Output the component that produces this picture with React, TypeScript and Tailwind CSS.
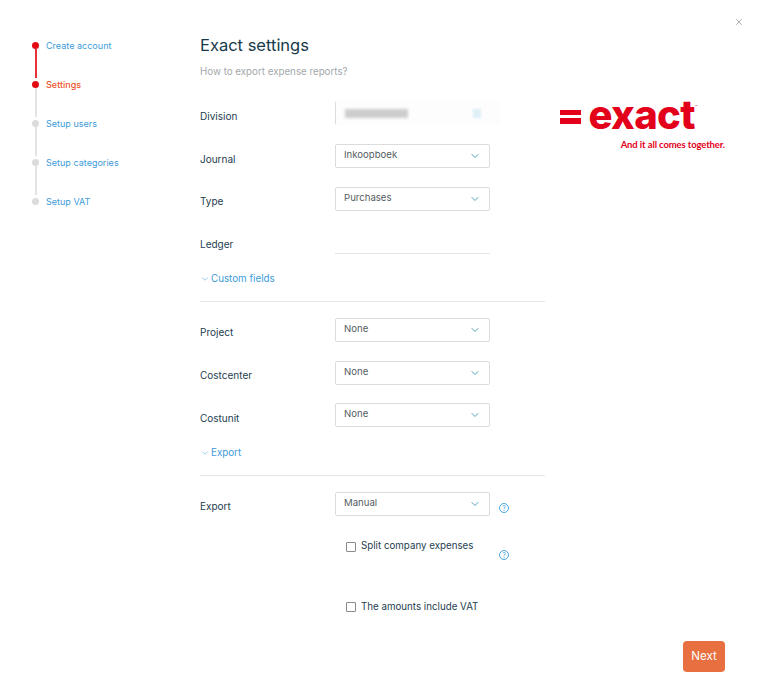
import React from "react";
import { ChevronDown, X } from "lucide-react";

type Step = { label: string; state: "done" | "active" | "todo" };

const steps: Step[] = [
	{ label: "Create account", state: "done" },
	{ label: "Settings", state: "active" },
	{ label: "Setup users", state: "todo" },
	{ label: "Setup categories", state: "todo" },
	{ label: "Setup VAT", state: "todo" },
];

function Stepper() {
	return (
		<ul className="w-[200px] shrink-0 pl-[32px] pt-[39px]">
			{steps.map((step, i) => (
				<li key={step.label} className="flex h-[39px] items-start gap-[7px]">
					<div className="flex h-full w-[7px] flex-col items-center pt-[3px]">
						<span className={`h-[7px] w-[7px] shrink-0 rounded-full ${step.state === "todo" ? "bg-[#dcdcdc]" : "bg-[#e30a13]"}`} />
						{i < steps.length - 1 && (
							<span className={`w-[2px] flex-1 ${i === 0 ? "bg-[#e8323a]" : "bg-[#e4e4e4]"}`} />
						)}
					</div>
					<span className={`text-[9px] leading-[13px] tracking-[0.02px] ${step.state === "active" ? "font-medium text-[#f0532d]" : "text-[#3d9bd9]"}`}>
						{step.label}
					</span>
				</li>
			))}
		</ul>
	);
}

function Select({ value }: { value: string }) {
	return (
		<div className="flex h-[24px] w-[155px] items-center justify-between rounded-[2px] border border-[#dcdcdc] bg-white pb-[2px] pl-[8px] pr-[8px]">
			<span className="text-[9.6px] text-[#555d62]">{value}</span>
			<ChevronDown size={12} strokeWidth={2} className="mt-[2px] text-[#4f9fbd]" />
		</div>
	);
}

function Row({ label, className, labelClass = "pt-[4px]", children }: { label: string; className: string; labelClass?: string; children?: React.ReactNode }) {
	return (
		<div className={`flex items-center ${className}`}>
			<label className={`w-[135px] shrink-0 text-[10px] text-[#24404f] ${labelClass}`}>{label}</label>
			{children}
		</div>
	);
}

function SectionLink({ label, className }: { label: string; className: string }) {
	return (
		<div className={`flex items-center gap-[1px] text-[#3d9bd9] ${className}`}>
			<ChevronDown size={10} strokeWidth={1.25} />
			<span className="text-[9.8px] leading-[13px]">{label}</span>
		</div>
	);
}

function Help({ className }: { className?: string }) {
	return (
		<span className={`ml-[9px] flex h-[10px] w-[10px] items-center justify-center rounded-full border border-[#4aa5e0] text-[7px] leading-none text-[#4aa5e0] ${className ?? ""}`}>
			?
		</span>
	);
}

function Check({ label }: { label: string }) {
	return (
		<div className="flex items-center gap-[5px]">
			<span className="h-[10px] w-[10px] rounded-[1px] border border-[#8a8a8a] bg-white" />
			<span className="text-[9.75px] text-[#24404f]">{label}</span>
		</div>
	);
}

function Logo() {
	return (
		<div className="flex flex-col items-end">
			<div className="flex items-start pr-[30px]">
				<div className="mr-[7px] flex flex-col gap-[3px] pt-[12px]">
					<span className="h-[5px] w-[21px] bg-[#e2001a]" />
					<span className="h-[6px] w-[21px] bg-[#e2001a]" />
				</div>
				<span className="text-[40px] font-extrabold leading-[34px] tracking-[-0.6px] text-[#e2001a]">exact</span>
				<span className="mt-[6px] w-0 text-[4px] leading-[5px] text-[#e2001a]">™</span>
			</div>
			<span className="mt-[7px] text-[9.5px] font-bold leading-[12px] tracking-[-0.12px] text-[#e2001a] font-['Lato',sans-serif]">
				And it all comes together.
			</span>
		</div>
	);
}

export default function App() {
	return (
		<div className="relative flex h-[693px] w-[763px] bg-white font-['Inter',sans-serif]">
			<X size={10} strokeWidth={1.5} className="absolute left-[734px] top-[17px] text-[#7f7f7f]" />
			<Stepper />
			<main className="w-[345px] shrink-0 pt-[34px]">
				<h1 className="text-[16.5px] leading-[22px] text-[#173a4a]">Exact settings</h1>
				<p className="mt-[9px] text-[9.75px] leading-[13px] text-[#a3a8ab]">How to export expense reports?</p>
				<Row label="Division" labelClass="pt-[6px]" className="mt-[23px]">
					<div className="flex h-[24px] w-[165px] items-center rounded-l-[2px] border-l border-[#dcdcdc] bg-[#fdfdfd] pl-[9px]">
						<span className="h-[9px] w-[63px] bg-[#cdcdcd] blur-[1.5px]" />
						<span className="ml-[65px] h-[9px] w-[8px] bg-[#dff0f7] blur-[1px]" />
					</div>
				</Row>
				<Row label="Journal" labelClass="pt-[6px]" className="mt-[19px]"><Select value="Inkoopboek" /></Row>
				<Row label="Type" className="mt-[19px]"><Select value="Purchases" /></Row>
				<Row label="Ledger" className="mt-[19px]">
					<div className="h-[24px] w-[155px] border-b border-[#e4e4e4]" />
				</Row>
				<SectionLink label="Custom fields" className="mt-[18px]" />
				<div className="mt-[16px] border-t border-[#e6e6e6]" />
				<Row label="Project" className="mt-[16px]"><Select value="None" /></Row>
				<Row label="Costcenter" className="mt-[19px]"><Select value="None" /></Row>
				<Row label="Costunit" labelClass="pt-[6px]" className="mt-[18px]"><Select value="None" /></Row>
				<SectionLink label="Export" className="mt-[19px]" />
				<div className="mt-[16px] border-t border-[#e6e6e6]" />
				<Row label="Export" className="mt-[16px]">
					<Select value="Manual" />
					<Help className="mt-[8px]" />
				</Row>
				<div className="ml-[146px] mt-[24px] flex h-[13px] items-center">
					<div className="w-[144px]"><Check label="Split company expenses" /></div>
					<Help className="mt-[17px] ml-[3px]" />
				</div>
				<div className="ml-[146px] mt-[47px]"><Check label="The amounts include VAT" /></div>
			</main>
			<aside className="flex flex-1 flex-col items-end pb-[21px] pr-[38px] pt-[98px]">
				<Logo />
				<button className="mt-auto h-[31px] w-[42px] rounded-[4px] bg-[#e87040] text-[11.5px] text-white">Next</button>
			</aside>
		</div>
	);
}
